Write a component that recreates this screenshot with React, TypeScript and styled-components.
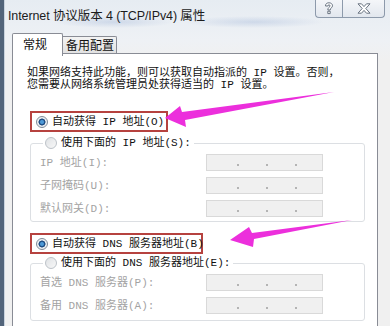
import React from "react";
import styled, { createGlobalStyle } from "styled-components";

const SONG = `"Liberation Mono", "Noto Sans CJK SC", monospace`;

const Global = createGlobalStyle`
  html, body { margin: 0; padding: 0; background: #f0f0f0; }
  body { font-family: "Noto Sans CJK SC", "Liberation Sans", sans-serif; }
  * { box-sizing: border-box; }
`;

const Page = styled.div`
  position: relative;
  width: 390px;
  height: 326px;
  overflow: hidden;
`;

const Window = styled.div`
  width: 390px;
  height: 326px;
  display: flex;
  flex-direction: column;
  background: linear-gradient(to bottom, #e6ecf2 0px, #eef1f5 40px, #f0f0f0 60px);
  border-left: 4px solid #52647a;
  box-shadow: inset 1px 0 0 #c9d3de;
`;

const TitleBar = styled.div`
  height: 30px;
  display: flex;
  align-items: flex-start;
  padding-left: 4px;
  background:
    radial-gradient(ellipse 60px 6px at 110px 22px, rgba(120,150,200,0.25), transparent),
    radial-gradient(ellipse 70px 6px at 250px 22px, rgba(120,150,200,0.25), transparent);
`;

const Title = styled.div`
  margin-top: 8px;
  font-family: "Liberation Sans", "Noto Sans CJK SC", sans-serif;
  font-size: 12.5px;
  line-height: 16px;
  color: #1c1c1c;
  letter-spacing: -0.1px;
`;

const Caption = styled.div`
  margin-left: auto;
  margin-right: 5px;
  display: flex;
  height: 18px;
`;

const CapButton = styled.div<{ $w: number; $left?: boolean }>`
  width: ${(p) => p.$w}px;
  height: 18px;
  display: flex;
  align-items: center;
  justify-content: center;
  background: linear-gradient(to bottom, #f4f6f9, #e2e7ee);
  border: 1px solid #8d9aab;
  border-top: none;
  ${(p) => (p.$left ? "border-right: none; border-bottom-left-radius: 4px;" : "border-bottom-right-radius: 4px;")}
`;

const TabStrip = styled.div`
  height: 23px;
  display: flex;
  align-items: flex-end;
  padding-left: 8px;
  position: relative;
  z-index: 1;
`;

const Tab = styled.div<{ $active?: boolean }>`
  font-size: 12px;
  line-height: 12px;
  color: #111;
  display: flex;
  align-items: center;
  border: 1px solid #898c95;
  ${(p) =>
    p.$active
      ? `
    height: 23px;
    margin-bottom: -3px;
    padding: 0 15px 2px 10px;
    background: #fff;
    border-bottom: none;
    border-radius: 2px 2px 0 0;
  `
      : `
    height: 17px;
    padding: 0 2px 0 3px;
    background: linear-gradient(to bottom, #f3f3f3, #e2e2e2);
    border-left: none;
    border-bottom: none;
    border-radius: 0 2px 0 0;
  `}
`;

const Panel = styled.div`
  margin-left: 8px;
  width: 366px;
  flex: 1;
  background: #fff;
  border: 1px solid #898c95;
  border-bottom: none;
  display: flex;
  flex-direction: column;
`;

const Desc = styled.div`
  margin: 13px 0 0 14px;
  font-family: ${SONG};
  font-size: 11px;
  line-height: 12px;
  color: #111;
  white-space: nowrap;
`;

const RedBox = styled.div<{ $w: number; $mt: number }>`
  margin: ${(p) => p.$mt}px 0 0 17px;
  width: ${(p) => p.$w}px;
  height: 21px;
  border: 2px solid #b6423f;
  display: flex;
  align-items: center;
  padding-left: 4px;
`;

const Option = styled.label`
  display: flex;
  align-items: center;
  gap: 4px;
  font-family: ${SONG};
  font-size: 11px;
  line-height: 14px;
  color: #111;
  white-space: nowrap;
`;

const Radio = styled.span<{ $checked?: boolean }>`
  width: 12px;
  height: 12px;
  border-radius: 50%;
  flex: none;
  border: 1px solid ${(p) => (p.$checked ? "#7f8b98" : "#bcc2c8")};
  background: ${(p) =>
    p.$checked
      ? "radial-gradient(circle at 50% 50%, #4d9ad8 0 1.5px, #1f4f86 2.5px 3.2px, #e6eaee 3.8px, #f8f9fa 6px)"
      : "linear-gradient(135deg, #dfe2e5, #f8f8f8)"};
`;

const Group = styled.fieldset<{ $mt: number; $pb: number }>`
  margin: ${(p) => p.$mt}px 0 0 17px;
  width: 335px;
  padding: 4px 0 ${(p) => p.$pb}px 9px;
  border: 1px solid #dcdfe3;
  border-radius: 3px;
  display: flex;
  flex-direction: column;
  gap: 6px;
`;

const Legend = styled.legend`
  margin-left: 3px;
  padding: 0 3px 0 2px;
`;

const Row = styled.div`
  display: grid;
  grid-template-columns: 166px 117px;
  align-items: center;
  height: 17px;
`;

const Label = styled.span`
  font-family: ${SONG};
  font-size: 11px;
  line-height: 14px;
  color: #a3a3a3;
  white-space: nowrap;
`;

const AddrBox = styled.div`
  height: 17px;
  border: 1px solid #d9d9d9;
  background: #f0f0f0;
  display: flex;
  align-items: center;
  padding-left: 30px;
  gap: 27px;
`;

const Dot = styled.span`
  width: 2px;
  height: 2px;
  margin-top: 4px;
  background: #b4b4b4;
`;

const Overlay = styled.svg`
  position: absolute;
  left: 0;
  top: 0;
  pointer-events: none;
`;

const Addr = () => (
  <AddrBox>
    <Dot />
    <Dot />
    <Dot />
  </AddrBox>
);

export default function App() {
  return (
    <Page>
      <Global />
      <Window>
        <TitleBar>
          <Title>Internet 协议版本 4 (TCP/IPv4) 属性</Title>
          <Caption>
            <CapButton $w={27} $left>
              <svg width="10" height="13" viewBox="0 0 10 13">
                <path
                  d="M1.5 4 C1.5 1.5 3.2 0.8 5 0.8 C7 0.8 8.5 2 8.5 3.8 C8.5 5.6 6.2 6 6.2 8 L3.8 8 C3.8 5.4 6 5.2 6 3.9 C6 3.1 5.6 2.8 5 2.8 C4.3 2.8 3.9 3.3 3.9 4 Z M3.8 9.2 L6.2 9.2 L6.2 11.6 L3.8 11.6 Z"
                  fill="#fff"
                  stroke="#5b6675"
                  strokeWidth="0.9"
                />
              </svg>
            </CapButton>
            <CapButton $w={43}>
              <svg width="14" height="11" viewBox="0 0 14 11">
                <path
                  d="M1 0.8 L4.5 0.8 L7 3.6 L9.5 0.8 L13 0.8 L8.8 5.5 L13 10.2 L9.5 10.2 L7 7.4 L4.5 10.2 L1 10.2 L5.2 5.5 Z"
                  fill="#fff"
                  stroke="#5b6675"
                  strokeWidth="0.9"
                />
              </svg>
            </CapButton>
          </Caption>
        </TitleBar>
        <TabStrip>
          <Tab $active>常规</Tab>
          <Tab>备用配置</Tab>
        </TabStrip>
        <Panel>
          <Desc>
            如果网络支持此功能，则可以获取自动指派的 IP 设置。否则，
            <br />
            您需要从网络系统管理员处获得适当的 IP 设置。
          </Desc>
          <RedBox $w={138} $mt={20}>
            <Option>
              <Radio $checked />
              自动获得 IP 地址(O)
            </Option>
          </RedBox>
          <Group $mt={4} $pb={4}>
            <Legend>
              <Option>
                <Radio />
                使用下面的 IP 地址(S):
              </Option>
            </Legend>
            <Row>
              <Label>IP 地址(I):</Label>
              <Addr />
            </Row>
            <Row>
              <Label>子网掩码(U):</Label>
              <Addr />
            </Row>
            <Row>
              <Label>默认网关(D):</Label>
              <Addr />
            </Row>
          </Group>
          <RedBox $w={173} $mt={11}>
            <Option>
              <Radio $checked />
              自动获得 DNS 服务器地址(B)
            </Option>
          </RedBox>
          <Group $mt={2} $pb={6}>
            <Legend>
              <Option>
                <Radio />
                使用下面的 DNS 服务器地址(E):
              </Option>
            </Legend>
            <Row>
              <Label>首选 DNS 服务器(P):</Label>
              <Addr />
            </Row>
            <Row>
              <Label>备用 DNS 服务器(A):</Label>
              <Addr />
            </Row>
          </Group>
        </Panel>
      </Window>
      <Overlay width="390" height="326" viewBox="0 0 390 326">
        <polygon
          points="165,118 180,106 182,112 334,92 185,120 186,127"
          fill="#ec2fdc"
        />
        <polygon
          points="230,240 249,227 252,233 352,220 254,239 253,247"
          fill="#ec2fdc"
        />
      </Overlay>
    </Page>
  );
}
